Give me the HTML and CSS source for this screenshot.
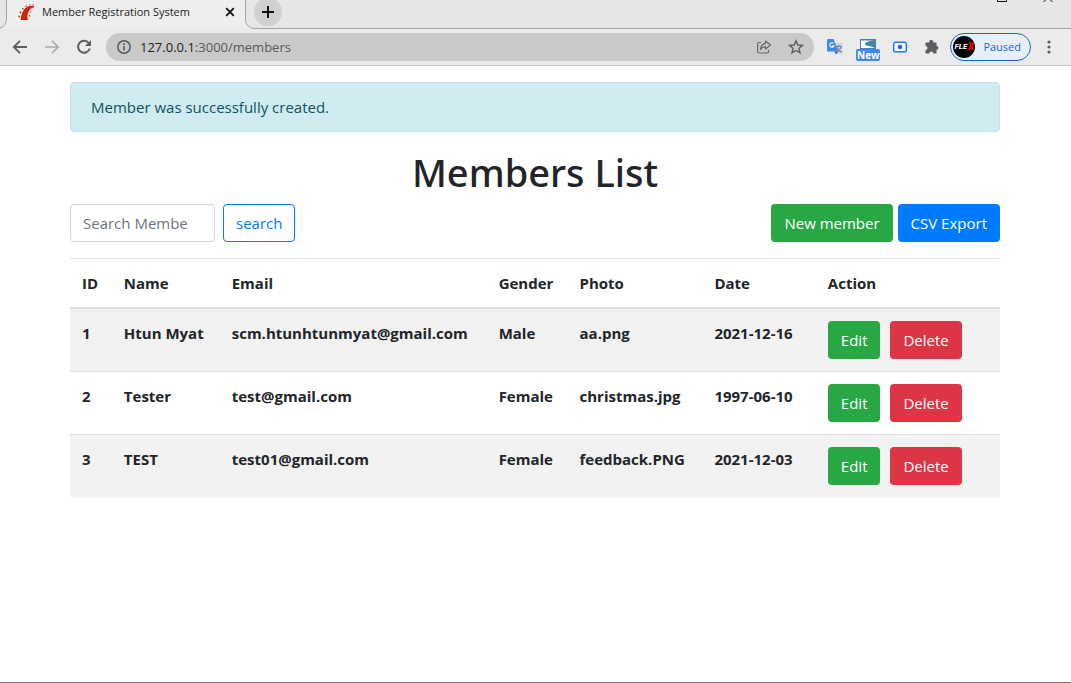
FILE: index.html
```html
<!DOCTYPE html>
<html lang="en">
<head>
<meta charset="utf-8">
<meta name="viewport" content="width=device-width, initial-scale=1">
<title>Member Registration System</title>
<link rel="stylesheet" href="styles.css">
</head>
<body>
<header class="browser">
  <div class="tab-strip">
    <svg class="tab-edge" width="7" height="29" viewBox="0 0 7 29"><path d="M0 28.5Q6.500 27 6.500 19V0H7V29H0z" fill="#eeeeee"/><path d="M0 28Q6.500 26 6.500 19V0" fill="none" stroke="#a5a5a5"/></svg>
    <div class="tab">
      <svg class="favicon" width="17" height="17" viewBox="0 0 17 17"><path d="M2.800 16C3 10.500 5 5.500 9 3C11.500 1.600 14 1.300 16 2L15.800 3.400C13 3.600 11.500 5.500 10.300 8C9.300 10.500 9 13 10 16Z" fill="#dc1f08"/><path d="M.5 11.500l1.800.5-.3 1.500-1.700-.5zM2 7.300l1.600.8-.7 1.300-1.600-.8zM4.600 3.700L6 4.800l-.9 1-1.400-1zM8.300 1.200l.9 1.200-1.200.6-.9-1.100zM12.300.2v1.100h-1.200V.2zM15.800.2v1h-1.200v-1zM12 7.200l1.200.5-.5 1-1.200-.5zM11 11l1.500.4-.2 1.200-1.500-.4z" fill="#dc3825"/></svg>
      <span class="tab-title">Member Registration System</span>
      <button class="icon-button tab-close" aria-label="Close tab"><svg width="10" height="10" viewBox="0 0 10 10"><path d="M1.200 1.200l7.600 7.600M8.800 1.200l-7.600 7.600" stroke="#111" stroke-width="1.800"/></svg></button>
    </div>
    <svg class="tab-edge" width="8" height="29" viewBox="0 0 8 29"><path d="M0 0H.5V19Q.5 27 8 28.500V29H0z" fill="#eeeeee"/><path d="M.5 0V19Q.5 27 8 28.500" fill="none" stroke="#a5a5a5"/></svg>
    <button class="icon-button new-tab" aria-label="New tab"><svg width="12" height="12" viewBox="0 0 12 12"><path d="M6 0v12M0 6h12" stroke="#111" stroke-width="2"/></svg></button>
    <div class="window-controls">
      <svg width="10" height="2" viewBox="0 0 10 2"><path d="M.5 0V1.500H9.500V0" fill="none" stroke="#111"/></svg>
      <svg width="10" height="2" viewBox="0 0 10 2"><path d="M.5 2L2.500 0M9.500 2L7.500 0" stroke="#111"/></svg>
    </div>
  </div>
  <div class="toolbar">
    <button class="icon-button nav" aria-label="Back"><svg width="16" height="16" viewBox="0 0 16 16"><path d="M15 8H2M8 1.800L1.800 8L8 14.200" fill="none" stroke="#5b5f63" stroke-width="1.900"/></svg></button>
    <button class="icon-button nav" aria-label="Forward"><svg width="16" height="16" viewBox="0 0 16 16"><path d="M1 8H14M8 1.800L14.200 8L8 14.200" fill="none" stroke="#adadad" stroke-width="1.700"/></svg></button>
    <button class="icon-button nav" aria-label="Reload"><svg width="16" height="16" viewBox="0 0 16 16"><path d="M12.800 4A6 6 0 1 0 13.800 9.500" fill="none" stroke="#5b5f63" stroke-width="2"/><path d="M15 1V7H9z" fill="#5b5f63"/></svg></button>
    <div class="address">
      <svg width="16" height="16" viewBox="0 0 16 16"><circle cx="8" cy="8" r="6.200" fill="none" stroke="#55595d" stroke-width="1.500"/><path d="M7.200 7h1.600v4.500H7.200zM7.200 4.300h1.600v1.600H7.200z" fill="#55595d"/></svg>
      <span class="url"><span class="host">127.0.0.1</span>:3000/members</span>
      <button class="icon-button" aria-label="Share"><svg width="16" height="16" viewBox="0 0 16 16"><path d="M5 3.500H3.200Q1.700 3.500 1.700 5V12.500Q1.700 14 3.200 14H11Q12.500 14 12.500 12.500V11" fill="none" stroke="#64686c" stroke-width="1.200"/><path d="M9.500 2L14.500 6L9.500 10V7.800Q6.300 7.600 4.500 10.500Q5 5 9.500 4.300z" fill="none" stroke="#64686c" stroke-width="1.200" stroke-linejoin="round"/></svg></button>
      <button class="icon-button" aria-label="Bookmark"><svg width="16" height="16" viewBox="0 0 16 16"><path d="M8 1.800L9.800 6L14.400 6.400L10.900 9.400L12 13.900L8 11.500L4 13.900L5.100 9.400L1.600 6.400L6.200 6z" fill="none" stroke="#5b5f63" stroke-width="1.400"/></svg></button>
    </div>
    <div class="extensions">
      <button class="icon-button" aria-label="Translate"><svg width="18" height="18" viewBox="0 0 18 18"><path d="M7 5h9.500v11H10z" fill="#d3d5d7"/><path d="M10 8.500h6M13 7v1.500M11 9q1 4 5 5M15 9q-1 3.500-4 5" fill="none" stroke="#70868c" stroke-width="1.100"/><path d="M2 1H7.700L12 13.500H2Q1 13.500 1 12.500V2Q1 1 2 1z" fill="#4285f4"/><path d="M8.500 13.500H12L10 16.500z" fill="#3056b5"/><path d="M7.600 5.500A2.200 2.200 0 1 0 7.900 8H5.900" fill="none" stroke="#fff" stroke-width="1.100"/></svg></button>
      <button class="icon-button capture" aria-label="Capture"><svg width="18" height="18" viewBox="0 0 18 18"><path d="M1 1h16v10H1z" fill="#4384ad"/><path d="M2 2.500H15.500Q10 2.500 7 4.500Q5 6.500 7 7.500Q10 7 16 10H2z" fill="#fafafa"/></svg><span class="badge">New</span></button>
      <button class="icon-button" aria-label="Camera"><svg width="16" height="16" viewBox="0 0 16 16"><rect x="1.700" y="3.200" width="12.600" height="9.600" rx="1.500" fill="#fff" stroke="#197df5" stroke-width="1.500"/><circle cx="8" cy="8" r="1.900" fill="#4646cb" stroke="#326be8"/></svg></button>
      <button class="icon-button" aria-label="Extensions"><svg width="18" height="18" viewBox="0 0 18 18"><path d="M3 4.500H6.300A2 2 0 1 1 10.200 4.500H13.500V8A1.900 1.900 0 1 1 13.500 11.800V15.500H10.300A2 2 0 0 0 6.300 15.500H2.500V12A2 2 0 0 0 2.500 8V4.500z" fill="#5b5f63"/></svg></button>
    </div>
    <button class="profile"><span class="avatar">FLE<b>X</b></span>Paused</button>
    <button class="icon-button menu" aria-label="Menu"><svg width="4" height="14" viewBox="0 0 4 14"><g fill="#5b5f63"><circle cx="2" cy="2" r="1.600"/><circle cx="2" cy="7" r="1.600"/><circle cx="2" cy="12" r="1.600"/></g></svg></button>
  </div>
</header>
<main class="container">
  <div class="alert" role="status">Member was successfully created.</div>
  <h1>Members List</h1>
  <div class="actions">
    <form class="search">
      <input type="text" aria-label="Search members" placeholder="Search Member">
      <button class="btn btn-outline" type="button">search</button>
    </form>
    <div class="links">
      <a class="btn btn-success" href="#">New member</a>
      <a class="btn btn-primary" href="#">CSV Export</a>
    </div>
  </div>
  <table class="members">
    <colgroup><col class="c-id"><col class="c-name"><col class="c-email"><col class="c-gender"><col class="c-photo"><col class="c-date"><col></colgroup>
    <thead>
      <tr><th>ID</th><th>Name</th><th>Email</th><th>Gender</th><th>Photo</th><th>Date</th><th>Action</th></tr>
    </thead>
    <tbody>
      <tr><th>1</th><th>Htun Myat</th><th>scm.htunhtunmyat@gmail.com</th><th>Male</th><th>aa.png</th><th>2021-12-16</th><td><div class="row-actions"><a class="btn btn-success" href="#">Edit</a><a class="btn btn-danger" href="#">Delete</a></div></td></tr>
      <tr><th>2</th><th>Tester</th><th>test@gmail.com</th><th>Female</th><th>christmas.jpg</th><th>1997-06-10</th><td><div class="row-actions"><a class="btn btn-success" href="#">Edit</a><a class="btn btn-danger" href="#">Delete</a></div></td></tr>
      <tr><th>3</th><th>TEST</th><th>test01@gmail.com</th><th>Female</th><th>feedback.PNG</th><th>2021-12-03</th><td><div class="row-actions"><a class="btn btn-success" href="#">Edit</a><a class="btn btn-danger" href="#">Delete</a></div></td></tr>
    </tbody>
  </table>
</main>
</body>
</html>
```
FILE: styles.css
```css
* { box-sizing: border-box; }

body {
  display: flex;
  flex-direction: column;
  min-height: 100vh;
  margin: 0;
  border-bottom: 1px solid #727272;
  background: #fff;
  color: #212529;
  font-family: "Open Sans", "Noto Sans", sans-serif;
  font-size: 15px;
  line-height: 24px;
}

svg { display: block; flex: none; }
button, input { font: inherit; }

.icon-button {
  display: flex;
  align-items: center;
  justify-content: center;
  padding: 0;
  border: 0;
  background: none;
}

/* Browser frame */
.browser { border-bottom: 1px solid #c6c6c6; }

.tab-strip {
  display: flex;
  height: 29px;
  background: #e6e6e6;
  border-bottom: 1px solid #a5a5a5;
}

.tab {
  display: flex;
  align-items: center;
  width: 238px;
  height: 29px;
  padding: 0 10px 5px 11px;
  background: #eeeeee;
  line-height: 16px;
}

.favicon { margin-right: 7px; }
.tab-title { flex: 1; white-space: nowrap; color: #222; font-size: 11px; }

.new-tab {
  width: 28px;
  height: 28px;
  margin: -2px 0 0 1px;
  border-radius: 50%;
  background: #d0d0d0;
}

.window-controls {
  display: flex;
  gap: 36px;
  margin-left: auto;
  padding-right: 18px;
}

.toolbar {
  display: flex;
  align-items: center;
  height: 36px;
  padding: 0 20px 0 12px;
  background: #ebebeb;
}

.nav { width: 16px; height: 28px; margin-right: 16px; }

.address {
  display: flex;
  flex: 1;
  align-items: center;
  gap: 16px;
  height: 28px;
  margin-left: -2px;
  padding: 0 10px;
  border-radius: 14px;
  background: #c9c9c9;
}

.url { flex: 1; margin-left: -8px; color: #55595d; font-size: 13px; }
.host { color: #222; }

.extensions { display: flex; align-items: center; gap: 15px; margin: 0 9px 0 12px; }
.extensions .icon-button { height: 28px; }
.capture { position: relative; }

.badge {
  position: absolute;
  left: -3px;
  bottom: 0;
  width: 24px;
  border-radius: 2px;
  background: #4285f4;
  color: #fff;
  font-size: 10px;
  font-weight: 700;
  line-height: 12px;
}

.profile {
  display: flex;
  align-items: center;
  gap: 8px;
  height: 28px;
  padding: 0 9px 0 2px;
  border: 1px solid #1b66d2;
  border-radius: 14px;
  background: #e9effa;
  color: #1b66d2;
  font-size: 11px;
}

.avatar {
  display: flex;
  align-items: center;
  justify-content: center;
  width: 22px;
  height: 22px;
  border-radius: 50%;
  overflow: hidden;
  background: #000;
  color: #fff;
  font-family: Roboto, sans-serif;
  font-size: 8px;
  font-style: italic;
  font-weight: 700;
}

.avatar b { color: #f00000; font-size: 11px; }
.menu { margin-left: 16px; }

/* Page */
.container {
  width: 100%;
  max-width: 961px;
  margin: 0 auto;
  padding: 16px 16px 16px 15px;
}

.alert {
  padding: 12px 20px;
  border: 1px solid #bee5eb;
  border-radius: 4px;
  background: #d1ecf1;
  color: #0c5460;
}

h1 {
  margin: 16px 0 8px;
  font-family: "Noto Sans", "Open Sans", sans-serif;
  font-size: 38px;
  font-weight: 500;
  line-height: 48px;
  text-align: center;
}

.actions {
  display: flex;
  justify-content: space-between;
  margin-bottom: 16px;
}

.search { display: flex; gap: 8px; }

.search input {
  width: 145px;
  height: 38px;
  padding: 6px 27px 6px 12px;
  border: 1px solid #ced4da;
  border-radius: 4px;
  color: #495057;
}

.search input::placeholder { color: #6c757d; opacity: 1; }
.links { display: flex; gap: 5px; }

.btn {
  padding: 6px 12px;
  border: 1px solid transparent;
  border-radius: 4px;
  color: #fff;
  font-weight: 400;
  text-decoration: none;
}

.btn-outline { border-color: #007bff; background: #fff; color: #007bff; }
.btn-success { background: #28a745; }
.btn-primary { background: #007bff; }
.btn-danger { background: #dc3545; }

.members {
  width: 100%;
  border-collapse: collapse;
  table-layout: fixed;
}

.members th,
.members td {
  padding: 12px;
  border-top: 1px solid #dee2e6;
  text-align: left;
  vertical-align: top;
  white-space: nowrap;
}

.members thead th { border-bottom: 2px solid #dee2e6; }
.members tbody tr:nth-child(odd) { background: #f2f2f2; }
.row-actions { display: flex; gap: 10px; }

.c-id { width: 4.5%; }
.c-name { width: 11.6%; }
.c-email { width: 28.7%; }
.c-gender { width: 8.7%; }
.c-photo { width: 14.5%; }
.c-date { width: 12.2%; }
```
